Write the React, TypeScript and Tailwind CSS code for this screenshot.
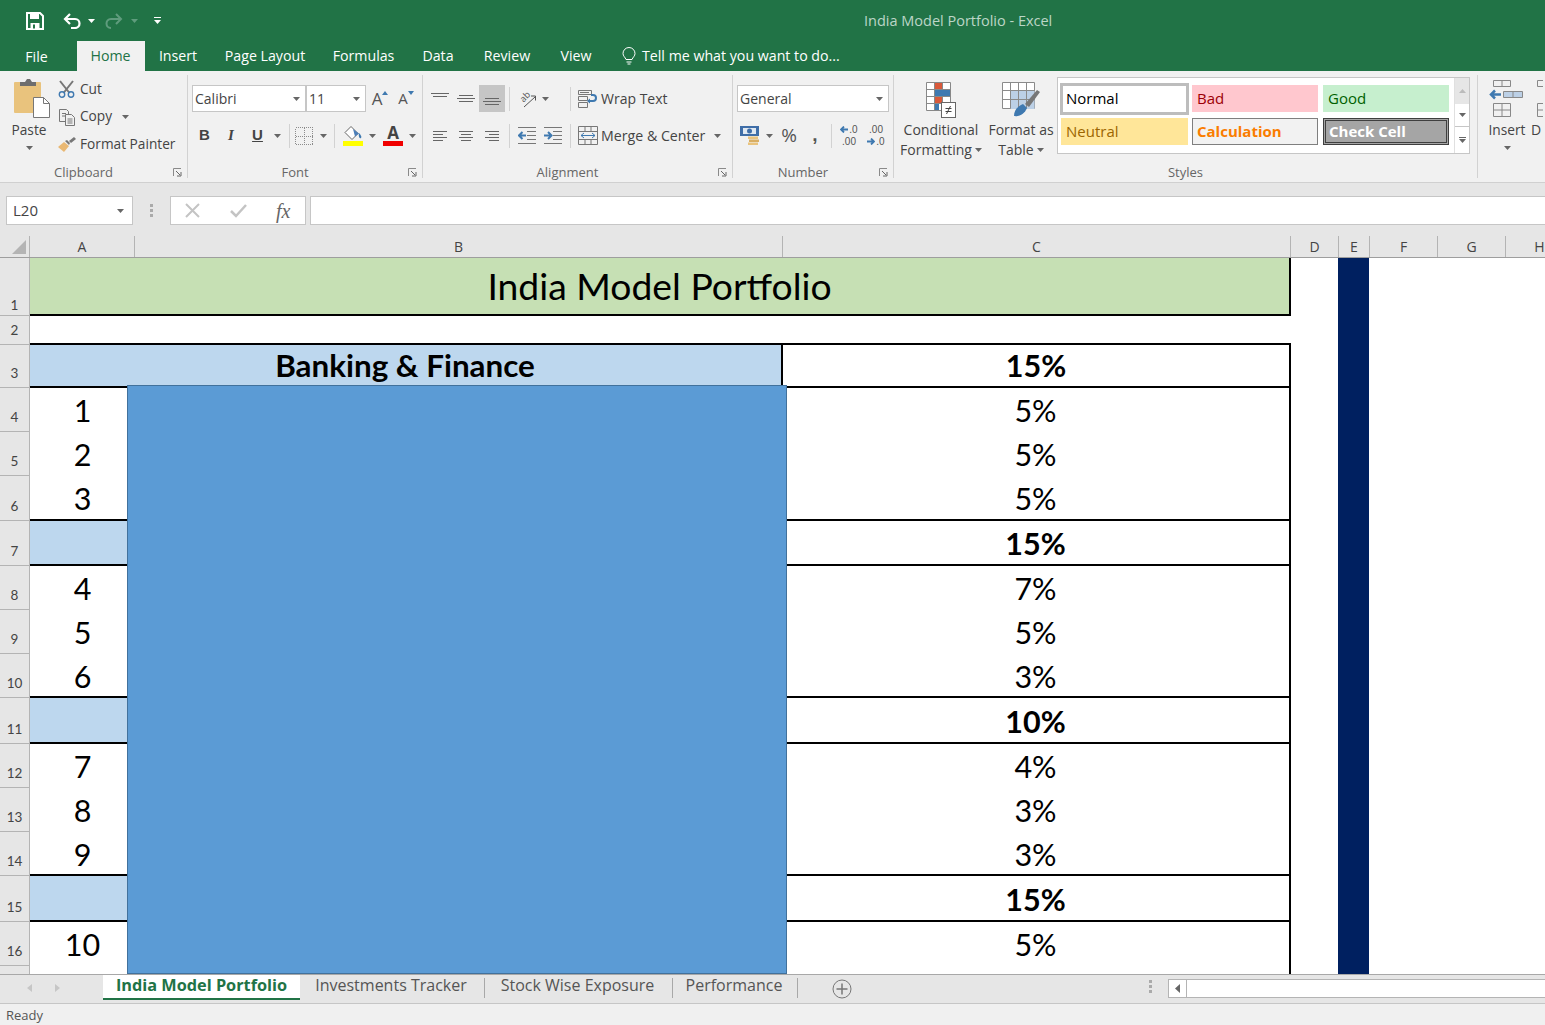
import type { ReactNode } from "react";

const Caret = ({ color = "#666" }: { color?: string }) => (
  <svg width="7" height="4" viewBox="0 0 7 4" className="shrink-0">
    <path d="M0 0h7L3.5 4z" fill={color} />
  </svg>
);

const Launcher = () => (
  <svg width="9" height="9" viewBox="0 0 9 9">
    <path d="M.5 8V.5H8" fill="none" stroke="#8a8a8a" />
    <path d="M3 3l4 4M8 4v4H4" fill="none" stroke="#666" />
  </svg>
);

const Group = ({ label, width, launcher, children }: { label: string; width: string; launcher?: boolean; children: ReactNode }) => (
  <div className={`${width} h-[103px] mt-[4px] shrink-0 border-r border-[#d2d2d2] flex flex-col`}>
    <div className="h-[88px]">{children}</div>
    <div className="h-[15px] flex text-[13px] leading-[19px] text-[#666]">
      <span className="flex-1 text-center">{label}</span>
      {launcher && (
        <span className="w-[20px] flex items-center justify-center h-[18px]">
          <Launcher />
        </span>
      )}
    </div>
  </div>
);

const Select = ({ value, width }: { value: string; width: string }) => (
  <div className={`${width} h-[27px] bg-white border border-[#c6c6c6] flex items-center justify-between pl-[2px] pr-[5px] text-[14px] text-[#444]`}>
    <span>{value}</span>
    <Caret />
  </div>
);

const Sep = ({ className = "" }: { className?: string }) => <div className={`w-px h-[24px] bg-[#d2d2d2] shrink-0 ${className}`} />;

const Slot = ({ width, children }: { width: string; children?: ReactNode }) => (
  <div className={`${width} h-[27px] shrink-0 flex items-center justify-center`}>{children}</div>
);

const AlignV = ({ pos }: { pos: "top" | "mid" | "bot" }) => {
  const y = pos === "mid" ? [3, 6, 9] : [6, 9, 12];
  return (
    <svg width="18" height="14" viewBox="0 0 18 14">
      {pos === "top" && <path d="M0 1.5h18M2 4.5h14" stroke="#666" />}
      {pos !== "top" && y.map((v, i) => <path key={v} d={`M${i === 1 ? 0 : 2} ${v + 0.5}h${i === 1 ? 18 : 14}`} stroke="#666" />)}
    </svg>
  );
};

const AlignH = ({ pos }: { pos: "l" | "c" | "r" }) => {
  const d =
    pos === "l"
      ? "M1 1.5h14M1 4.5h10M1 7.5h14M1 10.5h10"
      : pos === "c"
        ? "M1 1.5h14M3 4.5h10M1 7.5h14M3 10.5h10"
        : "M1 1.5h14M5 4.5h10M1 7.5h14M5 10.5h10";
  return (
    <svg width="16" height="12" viewBox="0 0 16 12">
      <path d={d} stroke="#666" />
    </svg>
  );
};

const Indent = ({ flip }: { flip?: boolean }) => (
  <svg width="19" height="17" viewBox="0 0 19 17">
    <path d="M0 .5h18M9 4.5h9M9 8.5h9M9 12.5h9M0 16.5h18" stroke="#777" />
    {flip ? <path d="M0 8.5h6M4 5l3.5 3.5L4 12" fill="none" stroke="#3f79b0" strokeWidth="2" /> : <path d="M8 8.5H2M4.5 5L1 8.5 4.5 12" fill="none" stroke="#3f79b0" strokeWidth="2" />}
  </svg>
);

const ClipboardIcon = () => (
  <svg width="38" height="40" viewBox="0 0 38 40">
    <rect x="1" y="4" width="27" height="31" rx="1" fill="#e9c37d" />
    <path d="M7 8V4h5l2-3h3l2 3h4v4z" fill="#6e6e6e" />
    <path d="M20.5 19.5h10l6 6v14h-16z" fill="#fff" stroke="#777" />
    <path d="M30.5 19.5v6h6" fill="none" stroke="#777" />
  </svg>
);

const Scissors = () => (
  <svg width="18" height="18" viewBox="0 0 18 18">
    <path d="M2 1l9.500 12M15 1L5.500 13" stroke="#777" strokeWidth="2" fill="none" />
    <circle cx="4" cy="14.500" r="2.700" fill="none" stroke="#3f79b0" strokeWidth="1.400" />
    <circle cx="13" cy="14.500" r="2.700" fill="none" stroke="#3f79b0" strokeWidth="1.400" />
  </svg>
);

const CopyIcon = () => (
  <svg width="18" height="18" viewBox="0 0 18 18" fill="none" stroke="#777">
    <path d="M1.500 1.500h7l2 2v10h-9zM4 5.500h4M4 8h4" />
    <path d="M7.500 6.500h6l3 3v8h-9z" fill="#f1f1f1" />
    <path d="M9.500 11h5M9.500 13h5M9.500 15h5" />
  </svg>
);

const Painter = () => (
  <svg width="18" height="15" viewBox="0 0 18 15">
    <path d="M0 10l6-5 5 4-5 6z" fill="#e9b873" />
    <path d="M7 4l2-1 3 3-1 2zM11 4l5-4 2 2-5 4z" fill="#777" />
  </svg>
);

const FillIcon = () => (
  <div className="flex flex-col items-center">
    <svg width="20" height="15" viewBox="0 0 20 15">
      <path d="M8 .5l7 7-6 6-7-7z" fill="#fff" stroke="#666" />
      <path d="M10 3l6 4.500-4 3z" fill="#4d7fb8" />
      <path d="M16 7c2 2 3 4 2 5s-3-1-2-5z" fill="#3f79b0" />
    </svg>
    <div className="w-[20px] h-[5px] bg-[#ffff00]" />
  </div>
);

const Borders = () => (
  <svg width="18" height="18" viewBox="0 0 18 18" shapeRendering="crispEdges">
    <path d="M.5.5h17v17H.5zM.5 9.500h17M9.500 .5v17" fill="none" stroke="#8c8c8c" strokeDasharray="1 1" />
  </svg>
);

const Orientation = () => (
  <svg width="20" height="20" viewBox="0 0 20 20" fill="none" stroke="#666">
    <text x="3" y="11" fontSize="9" fill="#555" stroke="none" transform="rotate(-45 8 8)">ab</text>
    <path d="M7 18L18 8M14 7h4.500v4.500" stroke="#555" />
  </svg>
);

const WrapIcon = () => (
  <svg width="20" height="18" viewBox="0 0 20 18" fill="none" stroke="#777">
    <path d="M.5.500h13v4H.5zM.5 6.500h9v4H.5zM.5 12.500h9v5H.5zM2 2.500h9" />
    <path d="M12 11h3c4 0 4-6 0-6h-2" stroke="#3f79b0" strokeWidth="2" />
    <path d="M12 8.500l-3 2.500 3 2.500" fill="#3f79b0" stroke="none" />
  </svg>
);

const MergeIcon = () => (
  <svg width="20" height="19" viewBox="0 0 20 19" fill="none">
    <path d="M.5.500h19v18H.5zM.5 5.500h19M.5 13.500h19M7 .5v5M13 .5v5M7 13.500v5M13 13.500v5" stroke="#777" />
    <path d="M3 9.500h14M6 7L3 9.500 6 12M14 7l3 2.500-3 2.500" stroke="#3f79b0" />
  </svg>
);

const MoneyIcon = () => (
  <svg width="20" height="20" viewBox="0 0 20 20">
    <rect x="0" y="0" width="19" height="10" fill="#3f6ea8" />
    <rect x="3" y="2" width="13" height="6" fill="#dfe8f2" />
    <circle cx="9.500" cy="5" r="2.500" fill="#3f6ea8" />
    <rect x="8" y="10.500" width="10" height="2.500" fill="#e9c37d" />
    <rect x="9" y="13.500" width="10" height="2.500" fill="#d9ae63" />
    <rect x="8" y="16.500" width="10" height="2.500" fill="#e9c37d" />
  </svg>
);

const Arrow = ({ dir }: { dir: "l" | "r" }) => (
  <svg width="8" height="7" viewBox="0 0 8 7" className="shrink-0 mr-[1px]">
    <path d={dir === "l" ? "M8 3.500H2M4 .5L1 3.500 4 6.500" : "M0 3.500h6M4 .5l3 3-3 3"} fill="none" stroke="#3f79b0" strokeWidth="1.800" />
  </svg>
);

const CondIcon = () => (
  <svg width="30" height="36" viewBox="0 0 30 36">
    <path d="M.5.500h24v28H.5zM8.500.500v28M16.500.500v28M.5 7.500h24M.5 14.500h24M.5 21.500h24" fill="#fff" stroke="#888" />
    <rect x="9" y="1" width="7" height="6" fill="#d9593a" />
    <rect x="9" y="8" width="15" height="6" fill="#3f79b0" />
    <rect x="9" y="15" width="7" height="6" fill="#d9593a" />
    <rect x="9" y="22" width="4" height="6" fill="#3f79b0" />
    <rect x="15.500" y="20.500" width="14" height="15" fill="#fff" stroke="#666" />
    <path d="M19.500 26.500h6M19.500 29.500h6M24.500 24l-4 8" stroke="#444" fill="none" />
  </svg>
);

const TableIcon = () => (
  <svg width="38" height="36" viewBox="0 0 38 36">
    <path d="M.5.500h32v26H.5z" fill="#fff" stroke="#8a8a8a" />
    <path d="M8.500 9h24v18h-24z" fill="#bcd0e6" />
    <path d="M.5 8.500h32M.5 17.500h32M8.500.500v26M16.500.500v26M24.500.500v26" stroke="#8a8a8a" fill="none" />
    <path d="M12 34c0-6 4-10 9-12l4 4c-2 5-7 9-13 8z" fill="#3f79b0" />
    <path d="M23 22L35 8l3 2-11 15z" fill="#777" />
  </svg>
);

const InsertIcon = () => (
  <svg width="36" height="38" viewBox="0 0 36 38" fill="none" stroke="#888">
    <path d="M4.500.500h17v6h-17zM13 .5v6M4.500 23.500h17v13h-17zM13 23.500v13M4.500 30h17" />
    <path d="M14.500 11.500h19v6h-19zM24 11.500v6" fill="#bcd0e6" />
    <path d="M12 14.500H2M6 10.500l-4 4 4 4" stroke="#3f79b0" strokeWidth="2.500" />
  </svg>
);

const DeleteIcon = () => (
  <svg width="12" height="38" viewBox="0 0 12 38" fill="none" stroke="#888">
    <path d="M6.500.500h6v6h-6zM6.500 23.500h6v13h-6zM6.500 30h6" />
  </svg>
);

const StyleCell = ({ label, className }: { label: string; className: string }) => (
  <div className={`flex items-center text-[15px] ${className}`}>{label}</div>
);

const Ribbon = () => (
  <div className="h-[112px] bg-[#f1f1f1] border-b border-[#d0d0d0] flex overflow-hidden text-[14px] text-[#444]">
    <Group label="Clipboard" width="w-[188px]" launcher>
      <div className="flex text-[13.700px]">
        <div className="w-[58px] flex flex-col items-center">
          <div className="mt-[3px] h-[40px] ml-[6px]">
            <ClipboardIcon />
          </div>
          <span className="mt-[2px] leading-[20px]">Paste</span>
          <div className="mt-[6px]">
            <Caret />
          </div>
        </div>
        <div className="flex flex-col">
          <div className="h-[28px] flex items-center gap-[4px]">
            <Scissors />
            <span>Cut</span>
          </div>
          <div className="h-[28px] flex items-center gap-[4px]">
            <CopyIcon />
            <span className="mb-[1px]">Copy</span>
            <span className="ml-[6px]">
              <Caret />
            </span>
          </div>
          <div className="h-[27px] flex items-center gap-[4px]">
            <Painter />
            <span className="whitespace-nowrap">Format Painter</span>
          </div>
        </div>
      </div>
    </Group>

    <Group label="Font" width="w-[235px]" launcher>
      <div className="pl-[4px] pt-[10px]">
        <div className="flex items-center">
          <Select value="Calibri" width="w-[114px]" />
          <Select value="11" width="w-[60px]" />
          <Slot width="w-[28px]">
            <span className="text-[17px] text-[#555]">A</span>
            <svg width="6" height="4" className="mb-[12px]"><path d="M0 4L3 0l3 4z" fill="#3f79b0" /></svg>
          </Slot>
          <Slot width="w-[24px]">
            <span className="text-[15px] text-[#555]">A</span>
            <svg width="6" height="4" className="mb-[12px]"><path d="M0 0h6L3 4z" fill="#3f79b0" /></svg>
          </Slot>
        </div>
        <div className="flex items-center mt-[10px]">
          <Slot width="w-[25px]"><span className="font-bold text-[15px] font-['Liberation_Sans',sans-serif]">B</span></Slot>
          <Slot width="w-[28px]"><span className="italic font-bold text-[15px] font-['Liberation_Serif',serif]">I</span></Slot>
          <Slot width="w-[25px]"><span className="underline font-bold text-[15px] font-['Liberation_Sans',sans-serif]">U</span></Slot>
          <Slot width="w-[14px]"><Caret /></Slot>
          <Sep className="ml-[5px] mr-[4px]" />
          <Slot width="w-[20px]"><Borders /></Slot>
          <Slot width="w-[18px]"><Caret /></Slot>
          <Sep className="ml-[2px] mr-[7px]" />
          <Slot width="w-[21px]"><FillIcon /></Slot>
          <Slot width="w-[19px]"><Caret /></Slot>
          <div className="w-[22px] h-[27px] flex flex-col items-center justify-center">
            <span className="font-bold text-[17px] leading-[16px] text-[#444]">A</span>
            <div className="w-[20px] h-[5px] bg-[#f00000]" />
          </div>
          <Slot width="w-[17px]"><Caret /></Slot>
        </div>
      </div>
    </Group>

    <Group label="Alignment" width="w-[310px]" launcher>
      <div className="pl-[4px] pt-[10px]">
        <div className="flex items-center">
          <Slot width="w-[26px]"><AlignV pos="top" /></Slot>
          <Slot width="w-[26px]"><AlignV pos="mid" /></Slot>
          <Slot width="w-[26px]">
            <div className="w-[26px] h-[27px] bg-[#c6c6c6] flex items-center justify-center"><AlignV pos="bot" /></div>
          </Slot>
          <Sep className="mx-[4px]" />
          <Slot width="w-[26px]"><Orientation /></Slot>
          <Slot width="w-[10px]"><Caret /></Slot>
          <Sep className="ml-[20px] mr-[7px]" />
          <WrapIcon />
          <span className="ml-[3px]">Wrap Text</span>
        </div>
        <div className="flex items-center mt-[10px]">
          <Slot width="w-[26px]"><AlignH pos="l" /></Slot>
          <Slot width="w-[26px]"><AlignH pos="c" /></Slot>
          <Slot width="w-[26px]"><AlignH pos="r" /></Slot>
          <Sep className="mx-[4px]" />
          <Slot width="w-[26px]"><Indent /></Slot>
          <Slot width="w-[26px]"><Indent flip /></Slot>
          <Sep className="ml-[4px] mr-[7px]" />
          <MergeIcon />
          <span className="ml-[3px] whitespace-nowrap text-[14.200px]">Merge &amp; Center</span>
          <span className="ml-[9px]"><Caret /></span>
        </div>
      </div>
    </Group>

    <Group label="Number" width="w-[161px]" launcher>
      <div className="pl-[4px] pt-[10px]">
        <Select value="General" width="w-[152px]" />
        <div className="flex items-center mt-[10px]">
          <Slot width="w-[26px]"><MoneyIcon /></Slot>
          <Slot width="w-[12px]"><Caret /></Slot>
          <Slot width="w-[28px]"><span className="text-[19px] text-[#555]">%</span></Slot>
          <Slot width="w-[24px]"><span className="font-bold text-[19px] text-[#555] font-['Liberation_Sans',sans-serif]">,</span></Slot>
          <Sep className="ml-[4px] mr-[4px]" />
          <Slot width="w-[26px]">
            <div className="flex flex-col items-center text-[10px] leading-[12px] text-[#555] font-['Liberation_Sans',sans-serif]">
              <span className="flex items-center"><Arrow dir="l" />.0</span>
              <span>.00</span>
            </div>
          </Slot>
          <Slot width="w-[28px]">
            <div className="flex flex-col items-center text-[10px] leading-[12px] text-[#555] font-['Liberation_Sans',sans-serif]">
              <span>.00</span>
              <span className="flex items-center"><Arrow dir="r" />.0</span>
            </div>
          </Slot>
        </div>
      </div>
    </Group>

    <Group label="Styles" width="w-[584px]">
      <div className="flex">
        <div className="w-[94px] flex flex-col items-center">
          <div className="h-[37px] mt-[7px]"><CondIcon /></div>
          <span className="leading-[20px] mt-[1px]">Conditional</span>
          <span className="leading-[20px] flex items-center gap-[3px] whitespace-nowrap">Formatting <Caret /></span>
        </div>
        <div className="w-[69px] pr-[3px] flex flex-col items-center">
          <div className="h-[37px] mt-[7px]"><TableIcon /></div>
          <span className="leading-[20px] mt-[1px] whitespace-nowrap">Format as</span>
          <span className="leading-[20px] flex items-center gap-[3px]">Table <Caret /></span>
        </div>
        <div className="mt-[2px] w-[413px] h-[77px] bg-white border border-[#c6c6c6] flex">
          <div className="w-[396px] pt-[5px] pl-[2px] grid grid-cols-[132px_131px_126px] grid-rows-[32px_29px] gap-y-[3px]">
            <StyleCell label="Normal" className="w-[129px] h-[32px] border-[3px] border-[#bdbdbd] pl-[3px] pb-[1px] text-black" />
            <StyleCell label="Bad" className="w-[126px] h-[27px] mt-[2px] pl-[5px] bg-[#ffc7ce] text-[#9c0006]" />
            <StyleCell label="Good" className="w-[126px] h-[27px] mt-[2px] pl-[5px] bg-[#c6efce] text-[#006100]" />
            <StyleCell label="Neutral" className="w-[127px] h-[27px] ml-[1px] pl-[5px] bg-[#ffe699] text-[#9c6500]" />
            <StyleCell label="Calculation" className="w-[126px] h-[27px] pl-[4px] bg-[#f2f2f2] border border-[#7f7f7f] font-bold text-[#fa7d00]" />
            <StyleCell label="Check Cell" className="w-[126px] h-[27px] pl-[3px] bg-[#a5a5a5] border-[3px] border-double border-[#3f3f3f] font-bold text-white" />
          </div>
          <div className="flex-1 flex flex-col border-l border-[#e0e0e0]">
            <div className="h-[26px] bg-[#e6e6e6] flex items-center justify-center">
              <svg width="7" height="4"><path d="M0 4L3.500 0 7 4z" fill="#bbb" /></svg>
            </div>
            <div className="h-[23px] border-b border-[#c6c6c6] flex items-center justify-center"><Caret /></div>
            <div className="flex-1 flex flex-col items-center justify-center gap-[1px]">
              <div className="w-[7px] h-px bg-[#666]" />
              <Caret />
            </div>
          </div>
        </div>
      </div>
    </Group>

    <div className="pl-[11px] mt-[4px] flex">
      <div className="w-[36px] flex flex-col items-center">
        <div className="h-[38px] mt-[5px]"><InsertIcon /></div>
        <span className="leading-[20px] mt-[2px] text-[13.700px]">Insert</span>
        <div className="mt-[6px]"><Caret /></div>
      </div>
      <div className="ml-[6px] flex flex-col">
        <div className="h-[38px] mt-[5px]"><DeleteIcon /></div>
        <span className="leading-[20px] mt-[2px]">D</span>
      </div>
    </div>
  </div>
);

const FormulaBar = () => (
  <div className="h-[53px] bg-[#e6e6e6] flex items-start pt-[13px] pl-[6px]">
    <div className="w-[127px] h-[29px] bg-white border border-[#c6c6c6] flex items-center justify-between pl-[6px] pr-[8px] text-[15px] text-[#444]">
      <span>L20</span>
      <Caret />
    </div>
    <div className="w-[37px] h-[29px] flex flex-col items-center justify-center gap-[2px]">
      <div className="w-[3px] h-[3px] bg-[#aaa]" />
      <div className="w-[3px] h-[3px] bg-[#aaa]" />
      <div className="w-[3px] h-[3px] bg-[#aaa]" />
    </div>
    <div className="w-[136px] h-[29px] bg-white border border-[#c6c6c6] flex items-center">
      <div className="w-[44px] flex justify-center">
        <svg width="15" height="15" viewBox="0 0 15 15"><path d="M1 1l13 13M14 1L1 14" stroke="#c4c4c4" strokeWidth="2" /></svg>
      </div>
      <div className="w-[47px] flex justify-center">
        <svg width="17" height="14" viewBox="0 0 17 14"><path d="M1 7l5 5L16 1" fill="none" stroke="#c4c4c4" strokeWidth="2.500" /></svg>
      </div>
      <div className="w-[44px] text-center italic text-[20px] text-[#666] font-['Liberation_Serif',serif]">fx</div>
    </div>
    <div className="ml-[4px] flex-1 h-[29px] bg-white border border-[#c6c6c6] border-r-0" />
  </div>
);

const columns = [
  { name: "A", w: "w-[105px]" },
  { name: "B", w: "w-[648px]" },
  { name: "C", w: "w-[508px]" },
  { name: "D", w: "w-[48px]" },
  { name: "E", w: "w-[31px]" },
  { name: "F", w: "w-[68px]" },
  { name: "G", w: "w-[68px]" },
  { name: "H", w: "w-[68px]" },
];

type Row = { n: number; h: string; kind: "title" | "gap" | "head" | "section" | "item" | "empty"; a?: string; pct?: string; line?: boolean };

const rows: Row[] = [
  { n: 1, h: "h-[58px]", kind: "title" },
  { n: 2, h: "h-[29px]", kind: "gap" },
  { n: 3, h: "h-[43px]", kind: "head", pct: "15%" },
  { n: 4, h: "h-[44px]", kind: "item", a: "1", pct: "5%" },
  { n: 5, h: "h-[44px]", kind: "item", a: "2", pct: "5%" },
  { n: 6, h: "h-[45px]", kind: "item", a: "3", pct: "5%", line: true },
  { n: 7, h: "h-[45px]", kind: "section", pct: "15%" },
  { n: 8, h: "h-[44px]", kind: "item", a: "4", pct: "7%" },
  { n: 9, h: "h-[44px]", kind: "item", a: "5", pct: "5%" },
  { n: 10, h: "h-[44px]", kind: "item", a: "6", pct: "3%", line: true },
  { n: 11, h: "h-[46px]", kind: "section", pct: "10%" },
  { n: 12, h: "h-[44px]", kind: "item", a: "7", pct: "4%" },
  { n: 13, h: "h-[44px]", kind: "item", a: "8", pct: "3%" },
  { n: 14, h: "h-[44px]", kind: "item", a: "9", pct: "3%", line: true },
  { n: 15, h: "h-[46px]", kind: "section", pct: "15%" },
  { n: 16, h: "h-[44px]", kind: "item", a: "10", pct: "5%" },
  { n: 17, h: "h-[44px]", kind: "empty" },
];

const SheetRow = ({ row }: { row: Row }) => {
  const boxed = row.kind === "head" || row.kind === "section";
  const lined = boxed || row.line ? "border-b-2 border-black" : "";
  const nudge = row.kind === "section" ? "pt-[3px]" : row.line ? "pt-[3px]" : row.kind === "item" ? "pt-[2px]" : "";
  return (
    <div className={`${row.h} flex`}>
      <div
        className={`w-[30px] shrink-0 bg-[#e6e6e6] border-r border-b border-[#b4b4b4] flex items-end justify-center text-[13.500px] text-[#444] ${row.n === 1 ? "pb-0" : "pb-[4px]"}`}
      >
        {row.kind !== "empty" && row.n}
      </div>
      {row.kind === "title" && (
        <div className="w-[1261px] bg-[#c6e0b4] border-b-2 border-r-2 border-black flex items-center justify-center text-[37.300px] text-black">India Model Portfolio</div>
      )}
      {row.kind === "gap" && <div className="w-[1261px] border-b-2 border-black" />}
      {row.kind === "head" && (
        <div className={`w-[751px] bg-[#bdd7ee] flex items-center justify-center pr-[1px] text-[31.400px] font-bold text-black ${lined}`}>Banking &amp; Finance</div>
      )}
      {row.kind === "section" && <div className={`w-[752px] bg-[#bdd7ee] ${lined}`} />}
      {(row.kind === "item" || row.kind === "empty") && (
        <div className={`w-[752px] flex items-center ${lined} ${nudge}`}>
          <span className="w-[105px] text-center text-[30.500px] text-black">{row.a}</span>
        </div>
      )}
      {row.kind !== "title" && row.kind !== "gap" && (
        <div
          className={`border-r-2 border-black flex items-center justify-center text-[30.500px] text-black ${lined} ${nudge} ${row.kind === "head" ? "w-[510px] border-l-2" : "w-[509px]"} ${boxed ? "font-bold" : ""}`}
        >
          {row.pct}
        </div>
      )}
      <div className="w-[47px] shrink-0" />
      <div className="w-[31px] shrink-0 bg-[#002060]" />
    </div>
  );
};

const Sheet = () => (
  <div className="relative h-[716px] overflow-hidden bg-white font-['Lato',sans-serif]">
    {rows.map((row) => (
      <SheetRow key={row.n} row={row} />
    ))}
    <div className="absolute left-[127px] top-[127px] bottom-0 w-[660px] bg-[#5b9bd5] border border-[#41719c]" />
  </div>
);

const ColumnHeaders = () => (
  <div className="h-[22px] bg-[#e6e6e6] border-b border-[#9e9e9e] flex overflow-hidden">
    <div className="w-[30px] shrink-0 border-r border-[#b4b4b4] flex items-end justify-end pr-[3px] pb-[3px]">
      <svg width="14" height="14" viewBox="0 0 14 14"><path d="M14 0v14H0z" fill="#b4b4b4" /></svg>
    </div>
    {columns.map((c) => (
      <div key={c.name} className={`${c.w} shrink-0 border-r border-[#b4b4b4] flex items-center justify-center text-[14px] text-[#444]`}>
        {c.name}
      </div>
    ))}
  </div>
);

const sheetTabs = [
  { name: "Investments Tracker", w: "w-[185px]" },
  { name: "Stock Wise Exposure", w: "w-[188px]" },
  { name: "Performance", w: "w-[125px]" },
];

const TabBar = () => (
  <div className="h-[30px] bg-[#e6e6e6] border-t border-b border-[#a8a8a8] border-b-[#c6c6c6] flex items-start">
    <div className="w-[103px] h-[26px] flex items-center pl-[27px] gap-[23px]">
      <svg width="5" height="8"><path d="M5 0v8L0 4z" fill="#c6c6c6" /></svg>
      <svg width="5" height="8"><path d="M0 0v8l5-4z" fill="#c6c6c6" /></svg>
    </div>
    <div className="w-[197px] h-[25px] bg-white border-b-2 border-[#217346] flex items-center justify-center pb-[2px] font-bold text-[16.300px] text-[#217346]">India Model Portfolio</div>
    {sheetTabs.map((t) => (
      <div key={t.name} className={`${t.w} h-[20px] mt-[3px] pb-[6px] pr-[2px] border-r border-[#a8a8a8] flex items-center justify-center text-[16px] text-[#555]`}>
        {t.name}
      </div>
    ))}
    <div className="ml-[34px] mt-[4px]">
      <svg width="20" height="20" viewBox="0 0 20 20" fill="none" stroke="#777">
        <circle cx="10" cy="10" r="9" />
        <path d="M10 4.500v11M4.500 10h11" strokeWidth="1.500" />
      </svg>
    </div>
    <div className="ml-[297px] mt-[5px] flex flex-col gap-[2px] items-center w-[3px]">
      <div className="w-[3px] h-[3px] bg-[#aaa]" />
      <div className="w-[3px] h-[3px] bg-[#aaa]" />
      <div className="w-[3px] h-[3px] bg-[#aaa]" />
    </div>
    <div className="ml-[16px] mt-[4px] w-[19px] h-[19px] bg-white border border-[#b4b4b4] flex items-center justify-center">
      <svg width="5" height="9"><path d="M5 0v9L0 4.500z" fill="#666" /></svg>
    </div>
    <div className="mt-[4px] flex-1 h-[19px] bg-white border-y border-[#b4b4b4]" />
  </div>
);

const tabs = [
  { name: "Insert", w: "w-[66px]" },
  { name: "Page Layout", w: "w-[108px]" },
  { name: "Formulas", w: "w-[89px]" },
  { name: "Data", w: "w-[60px]" },
  { name: "Review", w: "w-[78px]" },
  { name: "View", w: "w-[60px]" },
];

const App = () => (
  <div className="w-[1545px] h-[1025px] overflow-hidden font-['Open_Sans',sans-serif] flex flex-col">
    <div className="h-[41px] bg-[#217346] flex items-center text-white">
      <svg width="18" height="18" viewBox="0 0 18 18" className="ml-[26px]">
        <path d="M1 1h13l3 3v13H1z" fill="none" stroke="#fff" strokeWidth="2" />
        <path d="M4 2h9v5H4z" fill="#fff" />
        <path d="M4.500 11h9v6h-9z" fill="#fff" />
        <path d="M7 12.500h2v4H7z" fill="#217346" />
      </svg>
      <svg width="19" height="16" viewBox="0 0 19 16" className="ml-[19px]" fill="none" stroke="#fff" strokeWidth="2.200">
        <path d="M7 1L2 6l5 5M2 6h10c6 0 6 9 0 9H8" />
      </svg>
      <span className="ml-[6px]"><Caret color="#fff" /></span>
      <svg width="19" height="16" viewBox="0 0 19 16" className="ml-[9px]" fill="none" stroke="#5f9c7d" strokeWidth="2">
        <path d="M12 1l5 5-5 5M17 6H7C1 6 1 15 7 15" />
      </svg>
      <span className="ml-[8px]"><Caret color="#5f9c7d" /></span>
      <div className="ml-[16px] flex flex-col items-center gap-[2px]">
        <div className="w-[7px] h-[1px] bg-white" />
        <Caret color="#fff" />
      </div>
      <span className="ml-[703px] text-[14.500px] text-[#bcd6c7] whitespace-nowrap">India Model Portfolio - Excel</span>
    </div>
    <div className="h-[30px] bg-[#217346] flex text-[14.200px] text-white">
      <div className="w-[77px] flex items-center justify-center pt-[1px] pr-[4px]">File</div>
      <div className="w-[68px] bg-[#f1f1f1] text-[#217346] flex items-center justify-center pr-[1px]">Home</div>
      {tabs.map((t) => (
        <div key={t.name} className={`${t.w} flex items-center justify-center`}>
          {t.name}
        </div>
      ))}
      <div className="ml-[15px] flex items-center gap-[5px]">
        <svg width="16" height="18" viewBox="0 0 16 18" fill="none" stroke="#fff">
          <path d="M5 12.500C4 10 2 9 2 6.500a6 6 0 0 1 12 0c0 2.500-2 3.500-3 6zM5.500 15h5M6.500 17h3" />
        </svg>
        <span className="whitespace-nowrap">Tell me what you want to do...</span>
      </div>
    </div>
    <Ribbon />
    <FormulaBar />
    <ColumnHeaders />
    <Sheet />
    <TabBar />
    <div className="h-[21px] bg-[#f0f0f0] pl-[6px] pt-[3px] flex items-center text-[13px] text-[#555]">Ready</div>
  </div>
);

export default App;
